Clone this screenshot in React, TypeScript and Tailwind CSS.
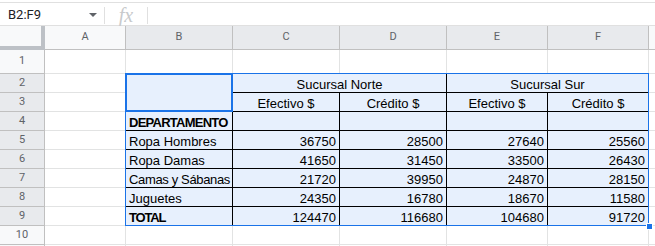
import clsx from "clsx";

// table cells: text, in-table, alignment, bold, spans
type CellDef = {
  text?: string;
  t?: boolean;
  align?: "l" | "c" | "r";
  bold?: boolean;
  span?: string;
  extra?: string;
};

const Cell = ({ text, t, align = "l", bold, span, extra }: CellDef) => (
  <div
    className={clsx(
      "flex items-end overflow-hidden whitespace-nowrap border-r border-b px-[3px] text-[13px] leading-[15px] text-black font-['Liberation_Sans',Arial,sans-serif]",
      t ? "border-black bg-[#e7f0fd]" : "border-[#e2e3e3] bg-white",
      align === "r" && "justify-end",
      align === "c" && "justify-center",
      bold && "font-bold",
      span,
      extra
    )}
  >
    {text}
  </div>
);

const RowHead = ({ n, sel }: { n?: number; sel?: boolean }) => (
  <div
    className={clsx(
      "flex items-center justify-center border-r border-b border-[#c0c0c0] text-[11px] text-[#5f6368] font-['Roboto',sans-serif]",
      sel ? "bg-[#e8eaed]" : "bg-[#f8f9fa]"
    )}
  >
    {n}
  </div>
);

const ColHead = ({ l, sel }: { l: string; sel?: boolean }) => (
  <div
    className={clsx(
      "flex items-center justify-center border-r border-b border-[#c0c0c0] text-[11px] text-[#5f6368] font-['Roboto',sans-serif]",
      sel ? "bg-[#e8eaed]" : "bg-[#f8f9fa]"
    )}
  >
    {l}
  </div>
);

const rows: { label: string; vals: number[] }[] = [
  { label: "Ropa Hombres", vals: [36750, 28500, 27640, 25560] },
  { label: "Ropa Damas", vals: [41650, 31450, 33500, 26430] },
  { label: "Camas y Sábanas", vals: [21720, 39950, 24870, 28150] },
  { label: "Juguetes", vals: [24350, 16780, 18670, 11580] },
];
const totals = [124470, 116680, 104680, 91720];

export default function App() {
  return (
    <div className="h-[246px] w-[655px] overflow-hidden bg-white">
      {/* formula bar */}
      <div className="h-[2px] bg-white" />
      <div className="flex h-[24px] items-center border-y border-[#e0e0e0] bg-white pt-[2px] font-['Roboto',sans-serif]">
        <div className="flex w-[104px] items-center justify-between pl-2 pr-[7px] text-[13px] text-[#202124]">
          <span>B2:F9</span>
          <svg width="8" height="4" viewBox="0 0 8 4">
            <path d="M0 0h8L4 4z" fill="#5f6368" />
          </svg>
        </div>
        <div className="h-[17px] border-l border-[#e0e0e0]" />
        <div className="w-[42px] text-center font-['Liberation_Serif',serif] text-[20px] italic leading-[20px] text-[#c8cacc]">
          fx
        </div>
        <div className="h-[17px] border-l border-[#e0e0e0]" />
      </div>

      {/* sheet grid */}
      <div className="relative grid grid-cols-[45px_81px_107px_107px_107px_101px_101px_1fr] grid-rows-[24px_24px_repeat(10,19px)]">
        <div className="border-r-4 border-b-4 border-[#bdc1c6] bg-[#f8f9fa]" />
        <ColHead l="A" />
        <ColHead l="B" sel />
        <ColHead l="C" sel />
        <ColHead l="D" sel />
        <ColHead l="E" sel />
        <ColHead l="F" sel />
        <ColHead l="" />

        {/* row 1 */}
        <RowHead n={1} />
        {Array.from({ length: 7 }).map((_, i) => (
          <Cell key={i} />
        ))}

        {/* row 2 */}
        <RowHead n={2} sel />
        <Cell />
        <Cell t span="row-span-2" />
        <Cell t span="col-span-2" align="c" text="Sucursal Norte" />
        <Cell t span="col-span-2" align="c" text="Sucursal Sur" />
        <Cell />

        {/* row 3 */}
        <RowHead n={3} sel />
        <Cell />
        <Cell t align="c" text="Efectivo $" />
        <Cell t align="c" text="Crédito $" />
        <Cell t align="c" text="Efectivo $" />
        <Cell t align="c" text="Crédito $" />
        <Cell />

        {/* row 4 */}
        <RowHead n={4} sel />
        <Cell />
        <Cell t bold text="DEPARTAMENTO" extra="tracking-[-0.75px]" />
        <Cell t />
        <Cell t />
        <Cell t />
        <Cell t />
        <Cell />

        {rows.map((r, i) => (
          <div key={r.label} className="contents">
            <RowHead n={5 + i} sel />
            <Cell />
            <Cell
              t
              text={r.label}
              extra={r.label === "Camas y Sábanas" ? "tracking-[-0.35px]" : undefined}
            />
            {r.vals.map((v, j) => (
              <Cell key={j} t align="r" text={String(v)} />
            ))}
            <Cell />
          </div>
        ))}

        {/* row 9 */}
        <RowHead n={9} sel />
        <Cell />
        <Cell t bold text="TOTAL" extra="tracking-[-1.2px]" />
        {totals.map((v, j) => (
          <Cell key={j} t align="r" text={String(v)} />
        ))}
        <Cell />

        {/* row 10, and the edge of row 11 */}
        <RowHead n={10} />
        {Array.from({ length: 7 }).map((_, i) => (
          <Cell key={i} />
        ))}
        <RowHead />
        {Array.from({ length: 7 }).map((_, i) => (
          <Cell key={i} />
        ))}

        {/* selection outline B2:F9 */}
        <div className="pointer-events-none absolute col-start-3 col-end-8 row-start-3 row-end-11 -left-px -top-px right-0 bottom-0 border border-[#1a73e8]" />
        {/* active cell B2:B3 */}
        <div className="pointer-events-none absolute col-start-3 col-end-4 row-start-3 row-end-5 -left-px -top-px right-0 bottom-0 border-2 border-[#1a73e8]" />
        {/* fill handle */}
        <div className="pointer-events-none absolute col-start-7 col-end-8 row-start-10 row-end-11 -right-[4px] -bottom-[4px] h-[7px] w-[7px] border border-white bg-[#1a73e8]" />
      </div>
    </div>
  );
}
